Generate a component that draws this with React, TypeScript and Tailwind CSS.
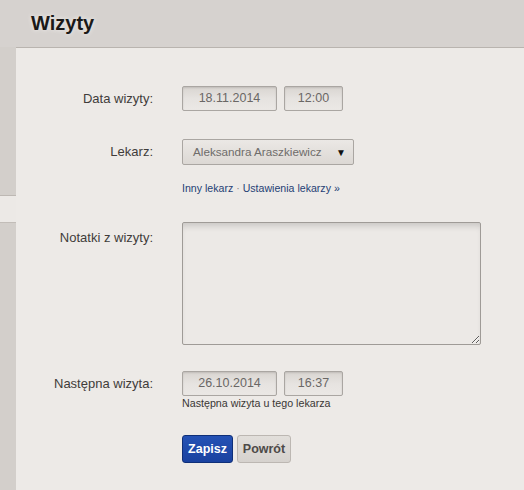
import React from "react";

const font = { fontFamily: '"Liberation Sans", Arial, sans-serif' };

const Field = ({ value, width }: { value: string; width: string }) => (
  <div
    className={`${width} h-[25px] flex items-center justify-center rounded-[2px] border border-[#aaa6a2] bg-gradient-to-b from-[#d9d5d1] via-[#e6e3e0] to-[#ebe8e5] text-[12.5px] text-[#6a6765] shadow-[inset_0_1px_2px_rgba(0,0,0,0.12)]`}
  >
    {value}
  </div>
);

const Label = ({ children, top }: { children: React.ReactNode; top?: boolean }) => (
  <div
    className={`w-[137px] shrink-0 text-right text-[13px] text-[#3f3c3a] ${top ? "pt-[6px]" : ""}`}
  >
    {children}
  </div>
);

export default function App() {
  return (
    <div className="w-full h-[490px] bg-[#d6d2cf] flex flex-col overflow-hidden" style={font}>
      <div className="h-[47px] shrink-0 pl-[31px] pt-[8px]">
        <h1 className="text-[20px] font-bold text-[#1b1918] [text-shadow:0_0_4px_#f2f0ee]">Wizyty</h1>
      </div>
      <div className="flex flex-1">
        <div className="w-[16px] shrink-0 flex flex-col">
          <div className="h-[149px] bg-[#d3cfcb] border-b border-[#bdb8b3]" />
          <div className="h-[26px] bg-[#ecE9e6]" />
          <div className="flex-1 bg-[#d3cfcb] border-t border-[#c2bdb8]" />
        </div>
        <div className="flex-1 bg-[#edeae7] border-t border-[#b9b4af] pt-[38px]">
          <div className="flex items-center gap-[29px]">
            <Label>Data wizyty:</Label>
            <div className="flex gap-[7px]">
              <Field value="18.11.2014" width="w-[95px]" />
              <Field value="12:00" width="w-[59px]" />
            </div>
          </div>

          <div className="flex items-center gap-[29px] mt-[28px]">
            <Label>Lekarz:</Label>
            <div className="w-[172px] h-[26px] flex items-center justify-between pl-[10px] pr-[7px] rounded-[2px] border border-[#aaa6a2] bg-gradient-to-b from-[#ebe8e5] to-[#dcd8d4] text-[11.7px] text-[#6f6c6a]">
              <span>Aleksandra Araszkiewicz</span>
              <span className="text-[10px] text-[#111]">▼</span>
            </div>
          </div>

          <div className="ml-[166px] mt-[16px] text-[10.6px] leading-[14px] text-[#1f3f75]">
            Inny lekarz <span className="text-[#888]">·</span> Ustawienia lekarzy »
          </div>

          <div className="flex gap-[29px] mt-[27px]">
            <Label top>Notatki z wizyty:</Label>
            <textarea
              className="w-[299px] h-[123px] rounded-[2px] border border-[#9f9b97] bg-[#ece9e6] shadow-[inset_0_6px_6px_-3px_rgba(0,0,0,0.15)] outline-none"
              defaultValue=""
            />
          </div>

          <div className="flex items-center gap-[29px] mt-[26px]">
            <Label>Następna wizyta:</Label>
            <div className="flex gap-[7px]">
              <Field value="26.10.2014" width="w-[95px]" />
              <Field value="16:37" width="w-[59px]" />
            </div>
          </div>
          <div className="ml-[166px] mt-[1px] text-[10.7px] leading-[13px] text-[#3a3735]">
            Następna wizyta u tego lekarza
          </div>

          <div className="ml-[166px] mt-[25px] flex gap-[4px]">
            <button className="w-[51px] h-[28px] rounded-[3px] border border-[#0f2f78] bg-gradient-to-b from-[#2552b5] to-[#1a42a0] text-[12.5px] font-bold text-white">
              Zapisz
            </button>
            <button className="w-[54px] h-[28px] rounded-[3px] border border-[#bcb7b2] bg-gradient-to-b from-[#e2dfdb] to-[#d6d2ce] text-[12.5px] font-bold text-[#4d4a48]">
              Powrót
            </button>
          </div>
        </div>
      </div>
    </div>
  );
}
